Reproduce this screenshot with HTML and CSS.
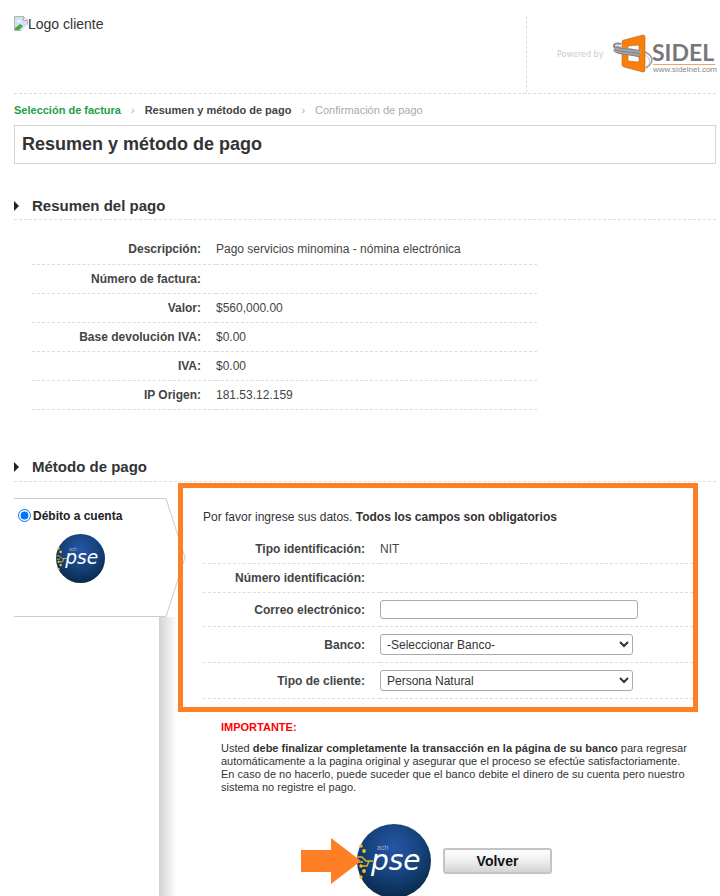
FILE: index.html
```html
<!DOCTYPE html>
<html lang="es">
<head>
    <meta charset="utf-8">
    <title>Resumen y método de pago</title>
    <link rel="stylesheet" href="styles.css">
</head>
<body>
    <!-- shared PSE logo -->
    <svg class="defs" width="0" height="0" aria-hidden="true">
        <defs>
            <radialGradient id="pse-blue" cx="50%" cy="32%" r="65%">
                <stop offset="0" stop-color="#2456a6"/>
                <stop offset="0.55" stop-color="#17437d"/>
                <stop offset="1" stop-color="#0a2c50"/>
            </radialGradient>
            <symbol id="pse" viewBox="0 0 74 74">
                <circle cx="37" cy="37" r="37" fill="url(#pse-blue)"/>
                <g fill="none" stroke="#e3b420" stroke-width="1.4">
                    <path d="M1 33h4l4 4h7M1 38h5M3 42h7l2-5"/>
                </g>
                <g fill="#f5bd1c">
                    <circle cx="4" cy="22" r="1.700"/>
                    <circle cx="7" cy="27" r="1.900"/>
                    <circle cx="4" cy="42" r="1.700"/>
                    <circle cx="7" cy="47" r="1.900"/>
                    <circle cx="4" cy="53" r="1.700"/>
                </g>
                <text class="pse-top" x="20" y="26">ach</text>
                <text class="pse-text" x="14" y="46">pse</text>
            </symbol>
        </defs>
    </svg>

    <header class="header">
        <div class="client">
            <svg width="14" height="15" viewBox="0 0 14 15" aria-hidden="true">
                <path d="M.5.5h9l4 4v10H.5z" fill="#cfe0fa" stroke="#b4b4b4"/>
                <path d="M9.500.5v4h4z" fill="#fff" stroke="#b4b4b4"/>
                <path d="M3 6a2 2 0 0 1 4 0z" fill="#fff"/>
                <path d="M1 14v-2l5-4 3 2-4 4z" fill="#4fa83d"/>
                <path d="M7 15l7-7v7z" fill="#fff"/>
            </svg>
            <span>Logo cliente</span>
        </div>
        <div class="powered">
            <span class="powered-by">Powered by</span>
            <svg width="106" height="42" viewBox="0 0 106 42" role="img" aria-label="SIDEL">
                <path d="M11 6l19-5q2 0 2 2v33q0 2-2 2l-19-5q-2-1-2-2V8q0-2 2-2zM15 12v15l11 1V11z" fill="#fb7d0a" fill-rule="evenodd" stroke="#a8682f" stroke-width=".6"/>
                <path d="M8 10C0 8-1 13 4 15" fill="none" stroke="#8d8d8d" stroke-width="2"/>
                <path d="M2 14c5 4 16 3 25 6" fill="none" stroke="#a5a5a5" stroke-width="7"/>
                <path d="M1 12c6 4 17 2 26 5M1 15c6 4 17 2 26 5M2 18c6 3 16 2 25 5" fill="none" stroke="#777" stroke-width=".8"/>
                <path d="M32 18c9 4 9 11 1 16" fill="none" stroke="#999" stroke-width="1.500"/>
                <path d="M32 21c6 3 6 9 1 12" fill="none" stroke="#bbb"/>
                <text class="sidel" x="39" y="27">SIDEL</text>
                <path d="M40 30.500h62" stroke="#eba36b"/>
                <text class="sidel-url" x="40" y="38">www.sidelnet.com</text>
            </svg>
        </div>
    </header>

    <nav class="steps">
        <a class="done" href="#">Selección de factura</a>
        <span class="sep">›</span>
        <strong>Resumen y método de pago</strong>
        <span class="sep">›</span>
        <span class="next">Confirmación de pago</span>
    </nav>

    <h1 class="title">Resumen y método de pago</h1>

    <section>
        <h2 class="subtitle">Resumen del pago</h2>
        <table class="data summary">
            <tr><th>Descripción:</th><td>Pago servicios minomina - nómina electrónica</td></tr>
            <tr><th>Número de factura:</th><td></td></tr>
            <tr><th>Valor:</th><td>$560,000.00</td></tr>
            <tr><th>Base devolución IVA:</th><td>$0.00</td></tr>
            <tr><th>IVA:</th><td>$0.00</td></tr>
            <tr><th>IP Origen:</th><td>181.53.12.159</td></tr>
        </table>
    </section>

    <section class="method">
        <h2 class="subtitle">Método de pago</h2>
        <div class="columns">
            <div class="side">
                <div class="tab">
                    <svg class="tab-shape" width="172" height="119" viewBox="0 0 172 119" aria-hidden="true">
                        <path d="M0 .5h152l19 59-19 59H0" fill="#fff" stroke="#ccc"/>
                    </svg>
                    <label class="option"><input type="radio" name="metodo" checked>Débito a cuenta</label>
                    <svg class="tab-logo" width="49" height="49" role="img" aria-label="PSE"><use href="#pse"/></svg>
                </div>
                <div class="shade"></div>
            </div>

            <div class="main">
                <form class="payer">
                    <p class="intro">Por favor ingrese sus datos. <b>Todos los campos son obligatorios</b></p>
                    <table class="data fields">
                        <tr><th>Tipo identificación:</th><td>NIT</td></tr>
                        <tr><th>Número identificación:</th><td></td></tr>
                        <tr class="field">
                            <th><label for="correo">Correo electrónico:</label></th>
                            <td><input type="text" id="correo" name="correo"></td>
                        </tr>
                        <tr class="field tall">
                            <th><label for="banco">Banco:</label></th>
                            <td><select id="banco" name="banco"><option>-Seleccionar Banco-</option></select></td>
                        </tr>
                        <tr class="field tall">
                            <th><label for="cliente">Tipo de cliente:</label></th>
                            <td><select id="cliente" name="cliente"><option>Persona Natural</option></select></td>
                        </tr>
                    </table>
                    <div class="highlight"></div>
                </form>

                <div class="notice">
                    <h3>IMPORTANTE:</h3>
                    <p>Usted <b>debe finalizar completamente la transacción en la página de su banco</b> para regresar<br>
                    automáticamente a la pagina original y asegurar que el proceso se efectúe satisfactoriamente.<br>
                    En caso de no hacerlo, puede suceder que el banco debite el dinero de su cuenta pero nuestro<br>
                    sistema no registre el pago.</p>
                </div>

                <div class="actions">
                    <svg class="arrow" width="60" height="46" viewBox="0 0 60 46" aria-hidden="true">
                        <path d="M0 12h30V0l30 23-30 23V34H0z" fill="#ff7f27"/>
                    </svg>
                    <button class="pay" type="button" aria-label="Pagar con PSE">
                        <svg width="74" height="74" aria-hidden="true"><use href="#pse"/></svg>
                    </button>
                    <button class="back" type="button">Volver</button>
                </div>
            </div>
        </div>
    </section>
</body>
</html>
```

FILE: styles.css
```css
* { box-sizing: border-box; }
html { height: 100%; }
body { margin: 0; padding: 16px 4px 0 14px; height: 100%; overflow: hidden; font-family: "Liberation Sans", Arial, sans-serif; font-size: 12px; line-height: 14px; color: #444; background-color: #fff; }
.defs { position: absolute; }

.header { display: flex; justify-content: space-between; height: 78px; border-bottom: 1px dashed #ddd; }
.client { display: flex; align-items: flex-start; font-size: 14px; line-height: 16px; color: #333; }
.powered { display: flex; align-items: center; gap: 10px; width: 190px; padding-left: 30px; border-left: 1px dashed #ddd; }
.powered-by { flex: none; font-family: "DejaVu Sans", sans-serif; font-size: 8px; color: #ccc; }
.powered svg { flex: none; }
.sidel { font: bold 23px Lato, sans-serif; fill: #77777b; }
.sidel-url { font: 8px "Liberation Sans", sans-serif; fill: #888; }

.steps { display: flex; align-items: center; gap: 10px; height: 31px; font-size: 11px; }
.steps .done { color: #1d9e48; font-weight: bold; text-decoration: none; }
.steps .sep { color: #aaa; }
.steps .next { color: #aaa; }

.title { margin: 0; padding: 0 7px; border: 1px solid #d4d4d4; font-size: 18px; line-height: 37px; color: #333; }
.subtitle { display: flex; align-items: center; gap: 13px; margin: 28px 0 0; height: 28px; border-bottom: 1px dashed #ddd; font-size: 15px; color: #333; }
.subtitle::before { content: ""; border-left: 5px solid #222; border-top: 5px solid transparent; border-bottom: 5px solid transparent; }

.data { border-collapse: collapse; table-layout: fixed; }
.data tr { height: 29px; }
.data th, .data td { padding: 0; border-bottom: 1px dashed #ddd; }
.data th { padding-right: 15px; text-align: right; }
.data td { text-align: left; }
.summary { width: 72%; margin: 15px 0 0 18px; }
.summary th { width: 184px; }

.method { margin-top: 44px; }
.columns { display: flex; padding-top: 16px; }
.side { flex: none; display: flex; flex-direction: column; width: 189px; }
.tab { position: relative; display: flex; flex-direction: column; height: 119px; padding: 11px 4px; }
.tab-shape { position: absolute; left: 0; top: 0; }
.option { position: relative; display: flex; align-items: center; gap: 2px; font-weight: bold; color: #222; }
.option input { margin: 0; width: 13px; height: 13px; }
.tab-logo { position: relative; margin: 11px 0 0 38px; }
.shade { flex: 1; width: 18px; margin-left: 145px; background: linear-gradient(to right, #d2d2d2, #fff); }

.main { flex: 1; }
.payer { position: relative; margin-right: 18px; }
.intro { margin: 0; padding: 12px 0 11px; color: #333; }
.fields { width: 100%; }
.fields th { width: 177px; }
.fields .field { height: 34px; }
.fields .tall { height: 36px; }
.fields input, .fields select { display: block; font: 12px "Liberation Sans", Arial, sans-serif; color: #333; background-color: #fff; border: 1px solid #aaa; border-radius: 3px; }
.fields input { width: 258px; height: 19px; }
.fields select { width: 253px; height: 21px; padding: 0 2px; }
/* orange box over the form */
.highlight { position: absolute; left: -25px; right: 0; top: -15px; bottom: -13px; border: 5px solid #ff7f27; pointer-events: none; }

.notice { margin: 22px 0 0 18px; font-size: 11px; line-height: 13px; color: #333; }
.notice h3 { margin: 0 0 8px; font-size: 11px; color: #f00; }
.notice p { margin: 0; }

.actions { display: flex; align-items: center; gap: 12px; margin: 30px 0 0 98px; }
.arrow { position: relative; margin-right: -16px; }
.pay { padding: 0; border: none; background: none; cursor: pointer; }
.pay svg { display: block; }
.back { width: 109px; height: 26px; border: 2px solid #c4c4c4; border-radius: 3px; background: linear-gradient(#fff, #eee 50%, #d4d4d4); font: bold 14px "Liberation Sans", Arial, sans-serif; color: #111; cursor: pointer; }
.pse-text { font: italic 200 28px "DejaVu Sans", sans-serif; fill: #fff; }
.pse-top { font: 7px "Liberation Sans", sans-serif; fill: #9db2d3; }
```
